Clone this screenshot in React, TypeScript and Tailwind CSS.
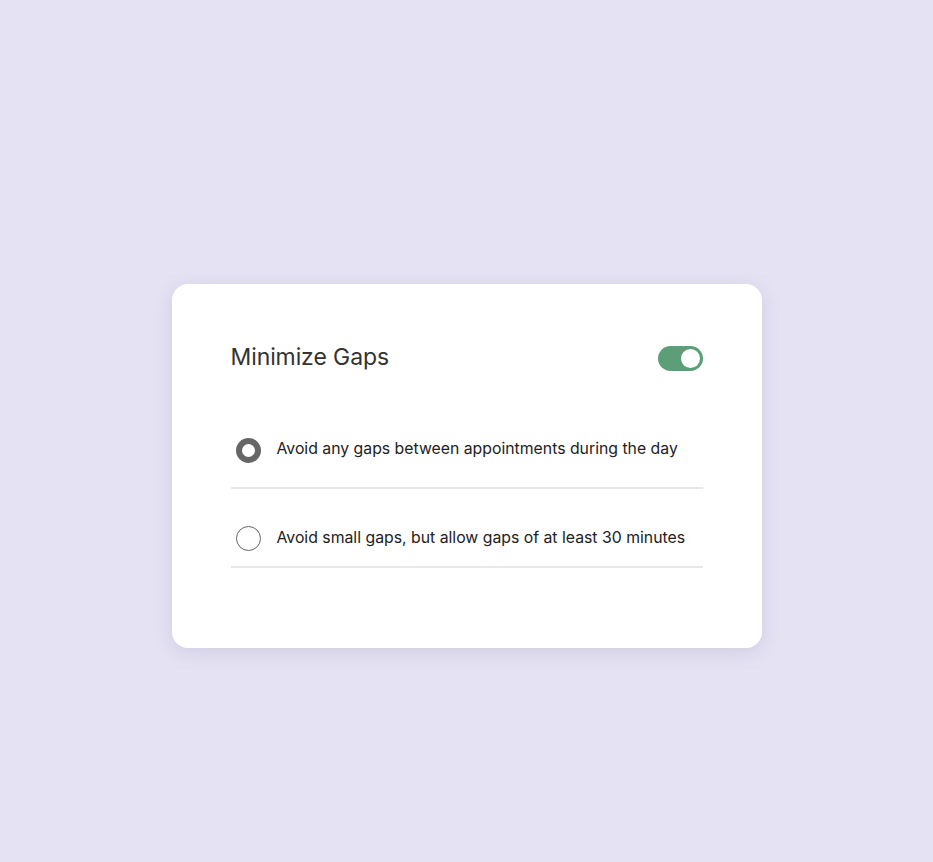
export default function App() {
  return (
    <div className="min-h-[862px] w-full bg-[#e5e2f3] flex justify-center pt-[284px]" style={{ fontFamily: "Inter, 'Noto Sans', sans-serif" }}>
      <div className="w-[590px] h-[364px] bg-white rounded-[16px] shadow-[0_4px_18px_rgba(120,110,160,0.18)] px-[59px] pt-[62px]">
        <div className="flex items-center justify-between h-[25px]">
          <h1 className="text-[23px] leading-none text-[#333333] font-normal tracking-[-0.1px] mt-[-3px]">Minimize Gaps</h1>
          <div className="w-[45px] h-[25px] rounded-full bg-[#5b9e77] flex items-center justify-end pr-[3px]">
            <div className="w-[19px] h-[19px] rounded-full bg-white" />
          </div>
        </div>
        <div className="mt-[67px] flex items-center gap-[16px] h-[25px] pl-[5px]">
          <div className="w-[25px] h-[25px] rounded-full border-[6px] border-[#666666] bg-white shrink-0" />
          <span className="text-[15.8px] text-[#222222] leading-none mt-[-3px]">Avoid any gaps between appointments during the day</span>
        </div>
        <div className="mt-[24px] h-[2px] bg-[#e8e8e8]" />
        <div className="mt-[37px] flex items-center gap-[16px] h-[25px] pl-[5px]">
          <div className="w-[25px] h-[25px] rounded-full border-[1.5px] border-[#666666] bg-white shrink-0" />
          <span className="text-[15.8px] text-[#222222] leading-none mt-[-2px]">Avoid small gaps, but allow gaps of at least 30 minutes</span>
        </div>
        <div className="mt-[15px] h-[2px] bg-[#e8e8e8]" />
      </div>
    </div>
  );
}
